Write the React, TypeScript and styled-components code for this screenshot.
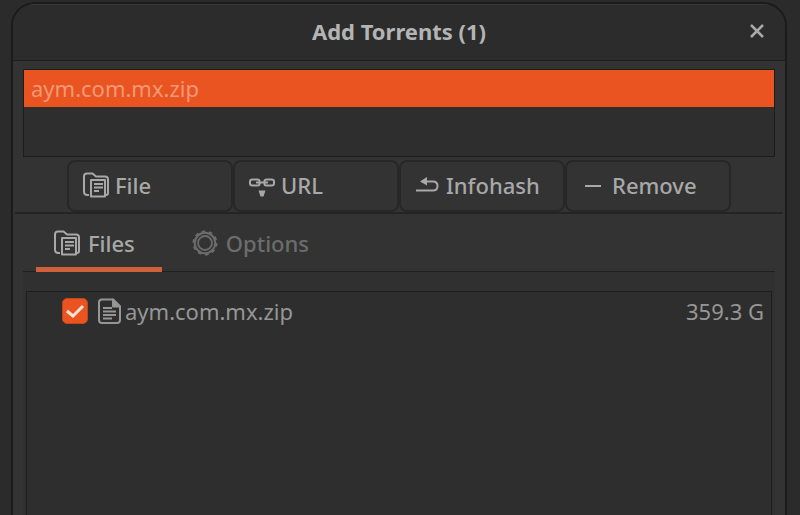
import React, { useState } from "react";
import styled, { createGlobalStyle } from "styled-components";

const GlobalStyle = createGlobalStyle`
  * { box-sizing: border-box; }
  body {
    margin: 0;
    background: #2b2b2b;
    color: #a8a8a8;
    font-family: "Noto Sans", "Open Sans", sans-serif;
    font-size: 22px;
    font-weight: 500;
    line-height: 28px;
    overflow: hidden;
  }
  button, input { font: inherit; color: inherit; margin: 0; }
`;

const Dialog = styled.main`
  display: flex;
  flex-direction: column;
  height: calc(100vh - 2px);
  margin: 2px 13px 0 11px;
  border: 2px solid #1b1b1b;
  border-bottom: 0;
  border-radius: 24px 24px 0 0;
  background: #333333;
  overflow: hidden;
`;

const TitleBar = styled.header`
  display: grid;
  grid-template-columns: 56px 1fr 56px;
  align-items: center;
  flex: none;
  height: 57px;
  padding-bottom: 3px;
  background: #2c2c2c;
  border-top: 1px solid #393939;
  border-bottom: 1px solid #1e1e1e;
`;

const Title = styled.h1`
  grid-column: 2;
  margin: 0;
  font-size: 22px;
  font-weight: 700;
  color: #b4b4b4;
  text-align: center;
`;

const CloseButton = styled.button`
  display: flex;
  justify-content: center;
  padding: 8px;
  border: 0;
  background: none;
`;

const TorrentList = styled.ul`
  flex: none;
  height: 88px;
  margin: 8px 10px 0;
  padding: 0;
  border: 1px solid #1c1c1c;
  background: #2e2e2e;
  list-style: none;
`;

const TorrentRow = styled.li`
  height: 37px;
  padding: 4px 7px;
  background: #e95420;
  color: #f29877;
  font-weight: 400;
`;

const Toolbar = styled.div`
  display: grid;
  grid-template-columns: repeat(4, minmax(0, 1fr));
  flex: none;
  margin: 3px 2px 0;
  padding: 0 52px;
  border-bottom: 2px solid #242424;
`;

const ToolButton = styled.button`
  display: flex;
  align-items: center;
  gap: 6px;
  height: 52px;
  padding: 0 14px 2px;
  border: 2px solid #272727;
  border-radius: 8px;
  background: #333333;
`;

const TabBar = styled.div`
  display: flex;
  flex: none;
  height: 58px;
  margin: 0 10px;
  padding: 0 13px;
  gap: 12px;
  border-bottom: 1px solid #202020;
`;

const Tab = styled.button<{ $active: boolean }>`
  display: flex;
  align-items: center;
  gap: 8px;
  height: 58px;
  padding: 4px 27px 0 18px;
  border: 0;
  border-bottom: 5px solid ${(p) => (p.$active ? "#d0603a" : "transparent")};
  background: none;
  color: ${(p) => (p.$active ? "#a8a8a8" : "#6c6c6c")};
`;

const TabPanel = styled.section`
  display: flex;
  flex: 1;
  min-height: 0;
  margin: 0 10px;
  padding: 19px 3px 0;
  background: #303030;
`;

const FileTree = styled.div`
  flex: 1;
  border: 1px solid #1e1e1e;
  border-bottom: 0;
  background: #2e2e2e;
`;

const FileTable = styled.table`
  width: 100%;
  border-collapse: collapse;
  color: #969696;
  font-weight: 400;
`;

const NameCell = styled.td`
  padding: 0 0 0 35px;
`;

const SizeCell = styled.td`
  padding: 0 7px 0 0;
  text-align: right;
  white-space: nowrap;
`;

const FileLabel = styled.label`
  display: flex;
  align-items: center;
  height: 37px;
`;

const CheckField = styled.span`
  position: relative;
  display: flex;
  margin-right: 10px;
`;

const Checkbox = styled.input`
  appearance: none;
  width: 26px;
  height: 26px;
  border: 1px solid #c8451a;
  border-radius: 5px;
  background: #2b2b2b;
  &:checked { background: #e95420; }
  &:not(:checked) + svg { display: none; }
`;

const Tick = styled.svg`
  position: absolute;
  inset: 0;
  pointer-events: none;
`;

const FileName = styled.span`
  margin-left: 4px;
`;

const Icon = styled.svg`
  flex: none;
  fill: none;
  stroke: currentColor;
  stroke-width: 2;
  stroke-linejoin: round;
`;

const FolderIcon = () => (
  <Icon width="26" height="26" viewBox="0 0 26 26" aria-hidden="true">
    <path d="M6 23H4.500Q1 23 1 19.500V4.500Q1 1.500 4 1.500H9.500L13 4.500H22Q25 4.500 25 7.500V21Q25 23 23 23" />
    <path d="M8 8H22V24.500H8Z" />
    <path d="M11 12H20M11 15.500H20M11 19H16" />
  </Icon>
);

const LinkIcon = () => (
  <Icon width="26" height="26" viewBox="0 0 26 26" aria-hidden="true">
    <path d="M10.500 9.500V9Q10.500 7.500 8.500 7.500H3.500Q1 7.500 1 9.500V11.500Q1 13.500 3.500 13.500H8.500Q10.500 13.500 10.500 12V11.500M15.500 9.500V9Q15.500 7.500 17.500 7.500H22.500Q25 7.500 25 9.500V11.500Q25 13.500 22.500 13.500H17.500Q15.500 13.500 15.500 12V11.500M7 10.500H19" />
    <path d="M9.500 18.500H16.500L14.500 24.500H11.500Z" fill="currentColor" stroke="none" />
  </Icon>
);

const ReturnIcon = () => (
  <Icon width="25" height="26" viewBox="0 0 25 26" aria-hidden="true">
    <path d="M7 9.500H18Q22.500 9.500 22.500 14T18 18.500H1" />
    <path d="M5 9.500L12 5V13.500Z" fill="currentColor" stroke="none" />
  </Icon>
);

const MinusIcon = () => (
  <Icon width="25" height="26" viewBox="0 0 25 26" aria-hidden="true">
    <path d="M4 14H20" />
  </Icon>
);

const GearIcon = () => (
  <Icon width="26" height="26" viewBox="0 0 26 26" aria-hidden="true">
    <circle cx="13" cy="13" r="7" strokeWidth="1.800" />
    <circle cx="13" cy="13" r="10.200" strokeWidth="2" />
    <circle cx="13" cy="13" r="11.500" strokeWidth="2" strokeDasharray="3.600 3.622" />
  </Icon>
);

const DocumentIcon = () => (
  <Icon width="23" height="26" viewBox="0 0 23 26" aria-hidden="true">
    <path d="M4 1.500H15L22 8.500V22Q22 25 19 25H4Q1 25 1 22V4.500Q1 1.500 4 1.500Z" />
    <path d="M15 1.500V8.500H22Z" fill="currentColor" />
    <path d="M5 10H14M5 13.500H18M5 17H18M5 20.500H14" strokeWidth="1.800" />
  </Icon>
);

const tools = [
  { label: "File", icon: <FolderIcon /> },
  { label: "URL", icon: <LinkIcon /> },
  { label: "Infohash", icon: <ReturnIcon /> },
  { label: "Remove", icon: <MinusIcon /> },
];

export default function App() {
  const [tab, setTab] = useState("files");
  return (
    <>
      <GlobalStyle />
      <Dialog role="dialog" aria-labelledby="dialog-title">
        <TitleBar>
          <Title id="dialog-title">Add Torrents (1)</Title>
          <CloseButton aria-label="Close">
            <Icon width="14" height="14" viewBox="0 0 14 14" aria-hidden="true">
              <path d="M1 1L13 13M13 1L1 13" strokeWidth="2.500" />
            </Icon>
          </CloseButton>
        </TitleBar>
        <TorrentList role="listbox" aria-label="Torrents">
          <TorrentRow role="option" aria-selected="true">aym.com.mx.zip</TorrentRow>
        </TorrentList>
        <Toolbar role="toolbar">
          {tools.map((tool) => (
            <ToolButton key={tool.label}>
              {tool.icon}
              {tool.label}
            </ToolButton>
          ))}
        </Toolbar>
        <TabBar role="tablist">
          <Tab role="tab" aria-selected={tab === "files"} $active={tab === "files"} onClick={() => setTab("files")}>
            <FolderIcon />
            Files
          </Tab>
          <Tab role="tab" aria-selected={tab === "options"} $active={tab === "options"} onClick={() => setTab("options")}>
            <GearIcon />
            Options
          </Tab>
        </TabBar>
        <TabPanel role="tabpanel">
          <FileTree>
            {tab === "files" && (
              <FileTable>
                <tbody>
                  <tr>
                    <NameCell>
                      <FileLabel>
                        <CheckField>
                          <Checkbox type="checkbox" defaultChecked />
                          <Tick width="26" height="26" viewBox="0 0 26 26" aria-hidden="true">
                            <path d="M5 13L11 18L21 8" fill="none" stroke="#fbe3d8" strokeWidth="3" />
                          </Tick>
                        </CheckField>
                        <DocumentIcon />
                        <FileName>aym.com.mx.zip</FileName>
                      </FileLabel>
                    </NameCell>
                    <SizeCell>359.3 G</SizeCell>
                  </tr>
                </tbody>
              </FileTable>
            )}
          </FileTree>
        </TabPanel>
      </Dialog>
    </>
  );
}
